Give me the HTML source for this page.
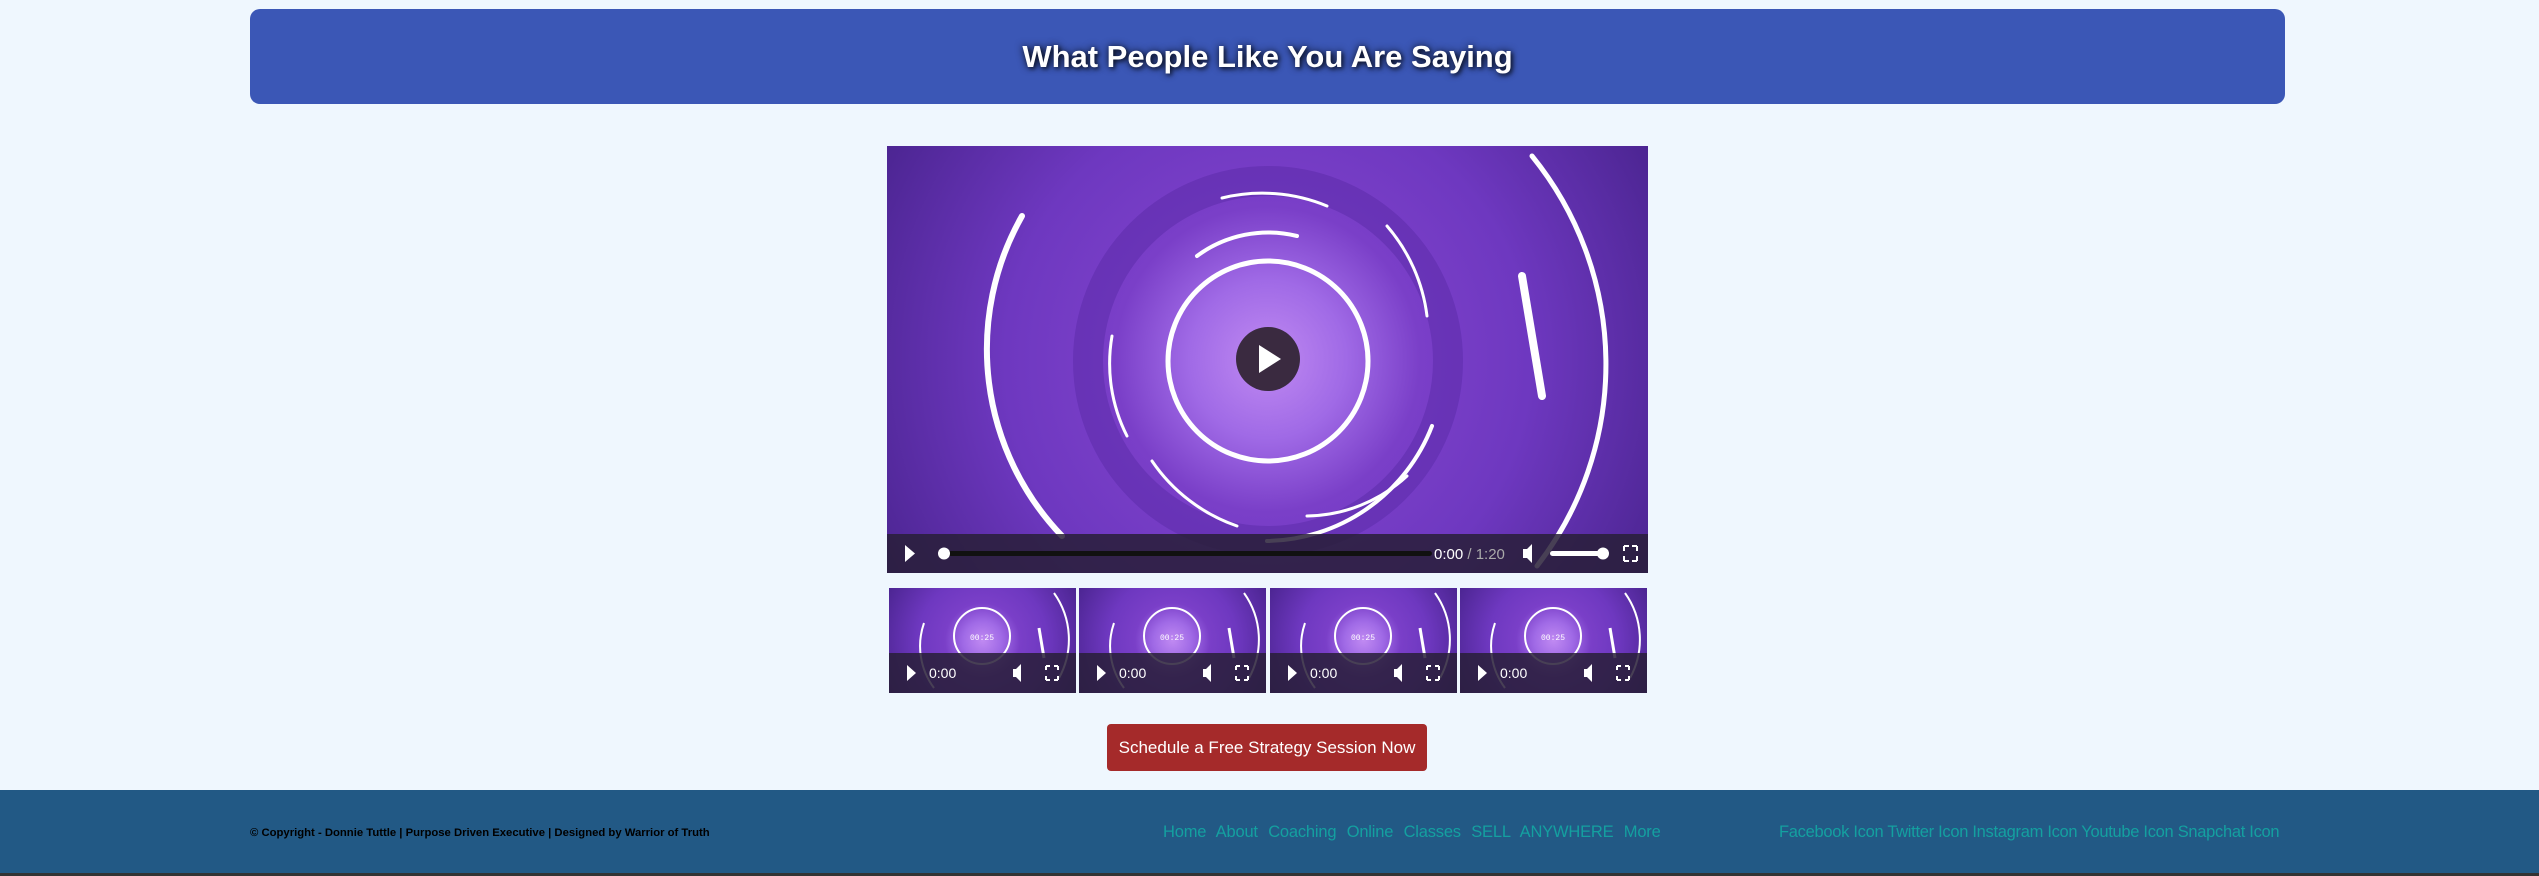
<!DOCTYPE html>
<html><head><meta charset="utf-8"><style>
*{margin:0;padding:0;box-sizing:border-box}
body{width:2539px;height:876px;background:#eff7fe;font-family:"Liberation Sans",Arial,sans-serif;position:relative;overflow:hidden}
.hdr{position:absolute;left:250px;top:9px;width:2035px;height:95px;background:#3b57b6;border-radius:10px;color:#fff;font-weight:bold;font-size:31px;text-align:center;line-height:95px;text-shadow:0 0 8px rgba(0,0,0,.8),2px 2px 4px rgba(0,0,0,.6)}
.vid{position:absolute;overflow:hidden;background:radial-gradient(circle at 50% 50%,#c08af2 0,#a06ae6 18%,#7a3fc8 35%,#6e38c0 60%,#4c2592 100%)}
.ctl{position:absolute;left:0;right:0;bottom:0;background:rgba(40,30,55,.85);color:#fff;font-size:16px}
.btn{position:absolute;left:1107px;top:724px;width:320px;height:47px;background:#a52a2a;border-radius:4px;color:#fff;font-size:17px;text-align:center;line-height:47px}
.ft{position:absolute;left:0;top:790px;width:2539px;height:86px;background:#225985}
.ft .c{position:absolute;left:250px;top:37px;font-size:11.3px;font-weight:bold;color:#000}
.ft .n{position:absolute;left:1163px;top:33px;font-size:16.5px;color:#14a0a0;word-spacing:6px;letter-spacing:-0.2px}
.ft .s{position:absolute;left:1779px;top:33px;font-size:16.5px;color:#14a0a0;letter-spacing:-0.3px}
.bl{position:absolute;left:0;top:873px;width:2539px;height:3px;background:#333}
</style></head><body>
<div class="hdr">What People Like You Are Saying</div>

<div class="vid" style="left:887px;top:146px;width:761px;height:427px">
<svg width="761" height="427" style="position:absolute;left:0;top:0">
<g fill="none" stroke="#fff" stroke-linecap="round">
<circle cx="381" cy="215" r="100" stroke-width="5"/>
<circle cx="381" cy="215" r="180" stroke="#5a2aa8" stroke-width="30" opacity=".5"/>
<path d="M135 70 A270 270 0 0 0 175 390" stroke-width="6"/>
<path d="M645 10 A330 330 0 0 1 650 420" stroke-width="5"/>
<path d="M310 110 A120 120 0 0 1 410 90" stroke-width="4"/>
<path d="M335 52 A170 170 0 0 1 440 60" stroke-width="3"/>
<path d="M500 80 A170 170 0 0 1 540 170" stroke-width="3"/>
<path d="M225 190 A160 160 0 0 0 240 290" stroke-width="3"/>
<path d="M265 315 A170 170 0 0 0 350 380" stroke-width="3"/>
<path d="M545 280 A180 180 0 0 1 380 395" stroke-width="4"/>
<path d="M520 330 A150 150 0 0 1 420 370" stroke-width="3"/>
<path d="M635 130 L655 250" stroke-width="8"/>
</g>
<circle cx="381" cy="213" r="32" fill="#3a2a40"/>
<path d="M372 199 L394 213 L372 227Z" fill="#fff"/>
</svg>
<div class="ctl" style="height:39px">
<svg width="761" height="39" style="position:absolute;left:0;top:0">
<path d="M18 11 L28 19.5 L18 28Z" fill="#fff"/>
<rect x="55" y="17" width="490" height="5" rx="2.5" fill="#111"/>
<circle cx="57" cy="19.5" r="6" fill="#fff"/>
<text x="547" y="25" fill="#fff" font-size="15" font-family="Liberation Sans">0:00 <tspan fill="#aaa">/ 1:20</tspan></text>
<path d="M636 15h4l5-5v19l-5-5h-4z" fill="#fff"/>
<rect x="663" y="17" width="55" height="5" rx="2.5" fill="#fff"/>
<circle cx="716" cy="19.5" r="6" fill="#fff"/>
<path d="M737 12h5M737 12v5M750 12h-5M750 12v5M737 27h5M737 27v-5M750 27h-5M750 27v-5" stroke="#fff" stroke-width="2"/>
</svg></div>
</div>

<div id="thumbs"></div>
<script>
var xs=[889,1079,1270,1460],h='';
xs.forEach(function(x){h+='<div class="vid" style="left:'+x+'px;top:588px;width:187px;height:105px"><svg width="187" height="105" style="position:absolute;left:0;top:0"><g fill="none" stroke="#fff"><circle cx="93" cy="48" r="28" stroke-width="2"/><path d="M35 35 A70 70 0 0 0 45 100" stroke-width="2"/><path d="M165 5 A80 80 0 0 1 170 90" stroke-width="2"/><path d="M150 40 L155 70" stroke-width="3"/></g><text x="93" y="52" fill="#fff" font-size="8" text-anchor="middle" font-family="Liberation Mono">00:25</text></svg><div class="ctl" style="height:40px"><svg width="187" height="40" style="position:absolute;left:0;top:0"><path d="M18 12 L27 20 L18 28Z" fill="#fff"/><text x="40" y="25" fill="#fff" font-size="14" font-family="Liberation Sans">0:00</text><path d="M124 16h3l5-5v18l-5-5h-3z" fill="#fff"/><path d="M157 13h4M157 13v4M169 13h-4M169 13v4M157 27h4M157 27v-4M169 27h-4M169 27v-4" stroke="#fff" stroke-width="2"/></svg></div></div>'});
document.getElementById('thumbs').innerHTML=h;
</script>

<div class="btn">Schedule a Free Strategy Session Now</div>

<div class="ft">
<div class="c">© Copyright - Donnie Tuttle | Purpose Driven Executive | Designed by Warrior of Truth</div>
<div class="n">Home About Coaching Online Classes SELL ANYWHERE More</div>
<div class="s">Facebook Icon Twitter Icon Instagram Icon Youtube Icon Snapchat Icon</div>
</div>
<div class="bl"></div>
</body></html>
